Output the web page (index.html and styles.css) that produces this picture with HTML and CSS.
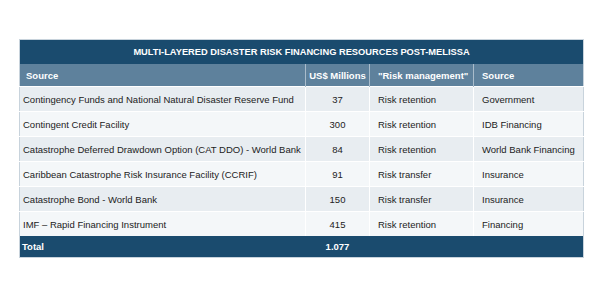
FILE: index.html
```html
<!DOCTYPE html>
<html>
<head>
<meta charset="utf-8">
<link rel="stylesheet" href="styles.css">
</head>
<body>
<table class="drf">
  <colgroup>
    <col class="c1"><col class="c2"><col class="c3"><col class="c4">
  </colgroup>
  <thead>
    <tr class="title"><th colspan="4">MULTI-LAYERED DISASTER RISK FINANCING RESOURCES POST-MELISSA</th></tr>
    <tr class="head">
      <th class="first">Source</th>
      <th class="num">US$ Millions</th>
      <th>"Risk management"</th>
      <th>Source</th>
    </tr>
  </thead>
  <tbody>
    <tr class="odd"><td class="first">Contingency Funds and National Natural Disaster Reserve Fund</td><td class="num">37</td><td>Risk retention</td><td>Government</td></tr>
    <tr class="even"><td class="first">Contingent Credit Facility</td><td class="num">300</td><td>Risk retention</td><td>IDB Financing</td></tr>
    <tr class="odd"><td class="first">Catastrophe Deferred Drawdown Option (CAT DDO) - World Bank</td><td class="num">84</td><td>Risk retention</td><td>World Bank Financing</td></tr>
    <tr class="even"><td class="first">Caribbean Catastrophe Risk Insurance Facility (CCRIF)</td><td class="num">91</td><td>Risk transfer</td><td>Insurance</td></tr>
    <tr class="odd"><td class="first">Catastrophe Bond - World Bank</td><td class="num">150</td><td>Risk transfer</td><td>Insurance</td></tr>
    <tr class="even"><td class="first">IMF – Rapid Financing Instrument</td><td class="num">415</td><td>Risk retention</td><td>Financing</td></tr>
  </tbody>
  <tfoot>
    <tr class="total"><td class="first">Total</td><td class="num">1.077</td><td></td><td></td></tr>
  </tfoot>
</table>
</body>
</html>
```
FILE: styles.css
```css
html, body {
  margin: 0;
  padding: 0;
  background: #ffffff;
}
body {
  padding: 39px 0 0 19px;
  font-family: "Liberation Sans", Arial, sans-serif;
  font-size: 9.5px;
  color: #222222;
}
.drf {
  border-collapse: collapse;
  table-layout: fixed;
  width: 564px;
  border: 1px solid #c8d3dc;
}
.c1 { width: 286px; }
.c2 { width: 64px; }
.c3 { width: 104px; }
.c4 { width: 110px; }
.drf th, .drf td {
  padding: 0 0 0 8px;
  text-align: left;
  white-space: nowrap;
  overflow: hidden;
}
.drf .first { padding-left: 3px; }
.drf .num { text-align: center; padding-left: 0; }
.title th {
  height: 24px;
  background: #1a4b6e;
  color: #ffffff;
  font-weight: bold;
  text-align: center;
  font-size: 9.3px;
  padding: 0;
}
.head th {
  height: 22px;
  background: #5e819c;
  color: #ffffff;
  font-weight: bold;
  border-left: 1px solid #a9bccb;
}
.head th.first {
  padding-left: 6px;
  border-left: none;
}
tbody td {
  height: 24px;
  border-left: 1px solid #ffffff;
  border-top: 1px solid #ffffff;
}
tbody td.first { border-left: none; }
.odd td { background: #e8edf1; }
.even td { background: #f4f7f9; }
.total td {
  height: 21px;
  background: #1a4b6e;
  color: #ffffff;
  font-weight: bold;
}
.total td.first { padding-left: 2px; }
```
